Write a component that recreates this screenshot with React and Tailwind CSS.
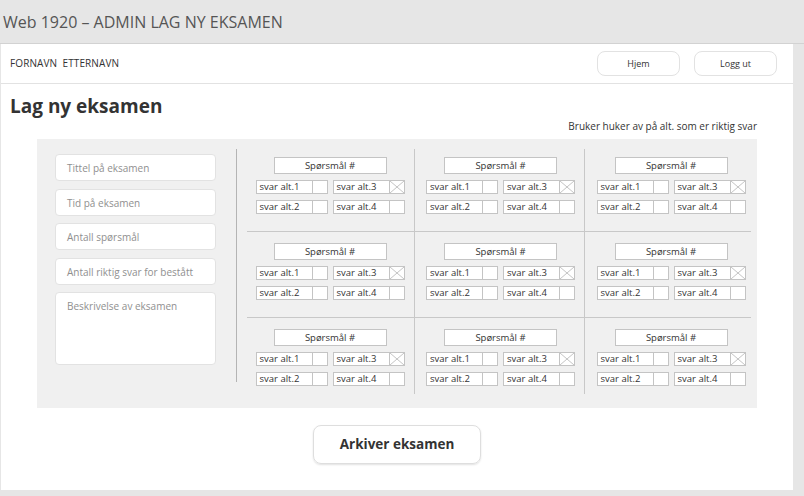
import React from "react";

function Svar({ label, checked }) {
  return (
    <div className="flex h-[14px] w-[72px] border border-[#c4c4c4] bg-white">
      <div className="flex flex-1 items-center pl-[3px] text-[9.5px] leading-none text-[#333]">{label}</div>
      <div className="relative w-[15px] border-l border-[#c4c4c4]">
        {checked && (
          <svg className="absolute inset-0" width="14" height="12" viewBox="0 0 14 12" preserveAspectRatio="none">
            <line x1="0" y1="0" x2="14" y2="12" stroke="#c4c4c4" strokeWidth="1" />
            <line x1="14" y1="0" x2="0" y2="12" stroke="#c4c4c4" strokeWidth="1" />
          </svg>
        )}
      </div>
    </div>
  );
}

function Cell({ className }) {
  return (
    <div className={"flex flex-col items-center " + className}>
      <div className="flex h-[17px] w-[113px] items-center justify-center border border-[#c4c4c4] bg-white text-[9.5px] leading-none text-[#333]">
        Spørsmål #
      </div>
      <div className="mt-[6px] flex gap-[5px]">
        <Svar label="svar alt.1" />
        <Svar label="svar alt.3" checked />
      </div>
      <div className="mt-[6px] flex gap-[5px]">
        <Svar label="svar alt.2" />
        <Svar label="svar alt.4" />
      </div>
    </div>
  );
}

function Field({ children, h = "h-[27px]" }) {
  return (
    <div className={"w-[161px] rounded-[4px] border border-[#e2e2e2] bg-white pl-[11px] text-[10px] text-[#8f8f8f] " + h}>
      {children}
    </div>
  );
}

export default function App() {
  const rows = [
    { pt: "pt-[8px]", h: "h-[82px]", bt: "" },
    { pt: "pt-[11px]", h: "h-[86px]", bt: "border-t border-[#c8c8c8]" },
    { pt: "pt-[11px]", h: "h-[77px]", bt: "border-t border-[#c8c8c8]" },
  ];
  const cols = [
    { w: "w-[167px]", bl: "pr-[1px]" },
    { w: "w-[170px]", bl: "border-l border-[#c8c8c8] pl-[2px]" },
    { w: "w-[167px]", bl: "border-l border-[#c8c8c8] pl-[6px]" },
  ];
  return (
    <div className="h-[496px] w-[804px] overflow-hidden bg-[#e6e6e6] font-['Open_Sans',sans-serif] text-[#333]">
      <div className="flex h-[44px] items-center border-b border-[#d2d2d2] pl-[3px] text-[16px] text-[#555]">
        Web 1920 – ADMIN LAG NY EKSAMEN
      </div>
      <div className="ml-[1px] flex h-[446px] w-[792px] flex-col bg-white">
        <div className="flex h-[40px] items-center justify-between border-b border-[#e2e2e2] pl-[9px] pr-[16px]">
          <div className="text-[10px] tracking-[0.1px] text-[#333]">FORNAVN&nbsp; ETTERNAVN</div>
          <div className="flex gap-[14px]">
            <div className="flex h-[25px] w-[83px] items-center justify-center rounded-[8px] border border-[#e2e2e2] text-[9px] text-[#333]">
              Hjem
            </div>
            <div className="flex h-[25px] w-[83px] items-center justify-center rounded-[8px] border border-[#e2e2e2] text-[9px] text-[#333]">
              Logg ut
            </div>
          </div>
        </div>
        <div className="pl-[9px] pt-[9px] text-[19px] font-bold leading-[26px] text-[#333]">Lag ny eksamen</div>
        <div className="ml-[36px] w-[720px]">
          <div className="text-right text-[10px] leading-[14px] text-[#333]">
            Bruker huker av på alt. som er riktig svar
          </div>
          <div className="mt-[6px] flex h-[269px] bg-[#f0f0f0] pl-[18px] pt-[10px]">
            <div className="mt-[5px] flex flex-col gap-[7.5px]">
              <Field><div className="leading-[26px]">Tittel på eksamen</div></Field>
              <Field><div className="leading-[26px]">Tid på eksamen</div></Field>
              <Field><div className="leading-[26px]">Antall spørsmål</div></Field>
              <Field><div className="leading-[26px]">Antall riktig svar for bestått</div></Field>
              <Field h="h-[73px]"><div className="pt-[4px] leading-[18px]">Beskrivelse av eksamen</div></Field>
            </div>
            <div className="ml-[20px] h-[233px] w-px bg-[#b4b4b4]" />
            <div className="ml-[10px] flex flex-col">
              {rows.map((r, i) => (
                <div key={i} className="flex">
                  {cols.map((c, j) => (
                    <Cell key={j} className={`${c.w} ${c.bl} ${r.h} ${r.pt} ${r.bt}`} />
                  ))}
                </div>
              ))}
            </div>
          </div>
        </div>
        <div className="mt-[17px] flex justify-center">
          <div className="flex h-[39px] w-[168px] items-center justify-center rounded-[8px] border border-[#dedede] text-[13.5px] font-bold text-[#333] shadow-[0_1px_2px_rgba(0,0,0,0.12)]">
            Arkiver eksamen
          </div>
        </div>
      </div>
    </div>
  );
}
